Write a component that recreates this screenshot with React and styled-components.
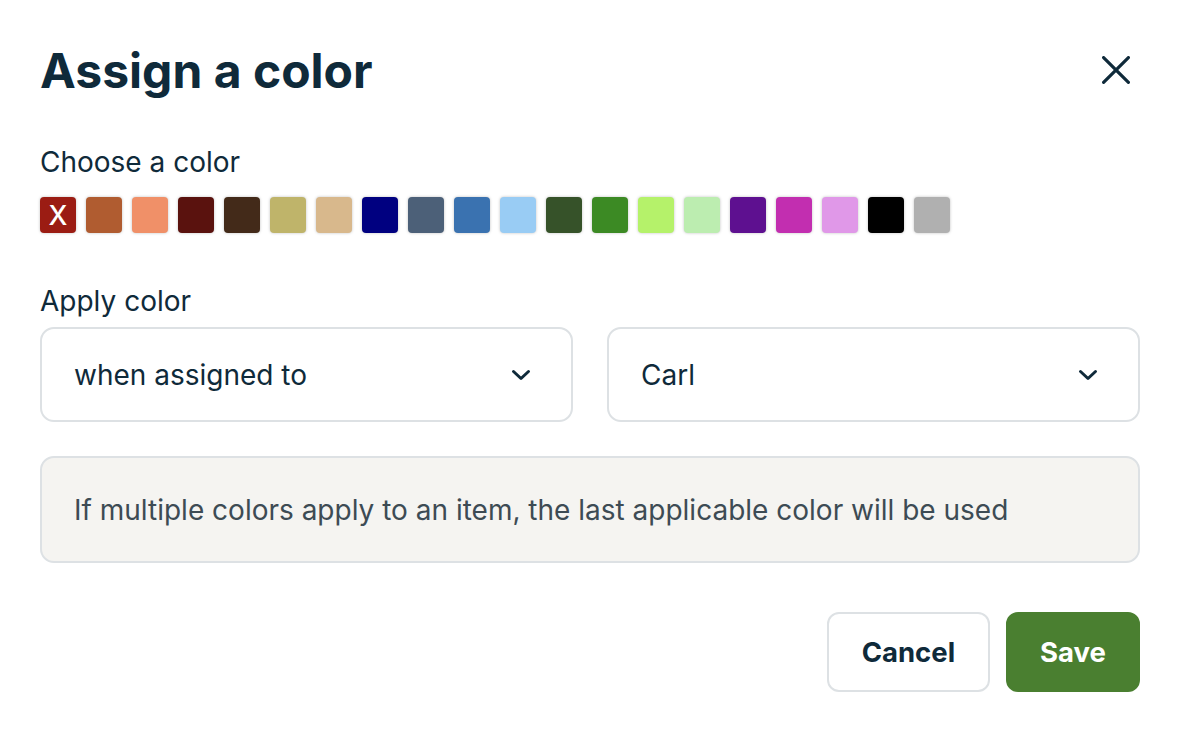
import React from "react";
import styled, { createGlobalStyle } from "styled-components";

const GlobalStyle = createGlobalStyle`
   body {
      margin: 0;
      background: #ffffff;
      font-family: Inter, "Noto Sans", sans-serif;
      color: #0f2a3a;
   }
`;

const Dialog = styled.div`
   width: 1100px;
   padding: 40px 40px 0;
   display: flex;
   flex-direction: column;
`;

const Header = styled.div`
   display: flex;
   justify-content: space-between;
   align-items: center;
   height: 60px;
`;

const Title = styled.h1`
   margin: 0;
   font-size: 48px;
   font-weight: 700;
   color: #0f2a3a;
`;

const CloseButton = styled.button`
   border: none;
   background: none;
   padding: 0;
   width: 28px;
   height: 28px;
   margin-right: 10px;
   display: flex;
   align-items: center;
   justify-content: center;
   color: #0f2a3a;
   cursor: pointer;
`;

const Label = styled.div`
   font-size: 28px;
   line-height: 34px;
   color: #0f2a3a;
   margin-top: ${({ top }) => top}px;
`;

const Swatches = styled.div`
   display: flex;
   gap: 10px;
   margin-top: 18px;
`;

const Swatch = styled.div`
   width: 36px;
   height: 36px;
   border-radius: 4px;
   background: ${({ color }) => color};
   box-shadow: 0 0 3px rgba(0, 0, 0, 0.25);
   display: flex;
   align-items: center;
   justify-content: center;
   color: #fff;
   font-size: 27px;
   font-weight: 500;
`;

const SelectRow = styled.div`
   display: grid;
   grid-template-columns: 1fr 1fr;
   gap: 34px;
   margin-top: 9px;
`;

const Select = styled.div`
   height: 95px;
   box-sizing: border-box;
   border: 2px solid #dde1e4;
   border-radius: 14px;
   padding: 0 40px 0 32px;
   display: flex;
   align-items: center;
   justify-content: space-between;
   font-size: 28px;
   color: #0f2a3a;
`;

const Note = styled.div`
   margin-top: 34px;
   height: 107px;
   box-sizing: border-box;
   background: #f5f4f1;
   border: 2px solid #dde1e4;
   border-radius: 14px;
   padding: 0 32px;
   display: flex;
   align-items: center;
   font-size: 28px;
   color: #3d4b54;
`;

const Footer = styled.div`
   display: flex;
   justify-content: flex-end;
   gap: 16px;
   margin-top: 49px;
`;

const Button = styled.button`
   height: 80px;
   box-sizing: border-box;
   padding: 0 ${({ primary }) => (primary ? 32 : 33)}px;
   border-radius: 12px;
   border: 2px solid ${({ primary }) => (primary ? "#4a7f30" : "#dde1e4")};
   background: ${({ primary }) => (primary ? "#4a7f30" : "#ffffff")};
   color: ${({ primary }) => (primary ? "#ffffff" : "#0f2a3a")};
   font-family: Inter, "Noto Sans", sans-serif;
   font-size: 27.5px;
   font-weight: 700;
   cursor: pointer;
`;

const colors = [
   "#9b1c13",
   "#b05c30",
   "#f09068",
   "#5a120e",
   "#432a19",
   "#bfb46a",
   "#d8b88c",
   "#000080",
   "#4c6078",
   "#3a72b0",
   "#99ccf4",
   "#365229",
   "#3c8a24",
   "#b5f26a",
   "#bcedb0",
   "#5e1090",
   "#c22eb0",
   "#e098e8",
   "#000000",
   "#b0b0b0",
];

const Chevron = () => (
   <svg width="20" height="20" viewBox="0 0 20 20" fill="none">
      <path
         d="M2.5 6.5l7.5 7 7.5-7"
         stroke="#0f2a3a"
         strokeWidth="3"
         strokeLinecap="round"
         strokeLinejoin="round"
      />
   </svg>
);

const App = () => {
   return (
      <>
         <GlobalStyle />
         <Dialog>
            <Header>
               <Title>Assign a color</Title>
               <CloseButton aria-label="close">
                  <svg width="28" height="28" viewBox="0 0 28 28" fill="none">
                     <path
                        d="M1.6 1.6l24.8 24.8M26.4 1.6L1.6 26.4"
                        stroke="#0f2a3a"
                        strokeWidth="3.2"
                        strokeLinecap="round"
                     />
                  </svg>
               </CloseButton>
            </Header>
            <Label top={45}>Choose a color</Label>
            <Swatches>
               {colors.map((c, i) => (
                  <Swatch key={c} color={c}>
                     {i === 0 ? "X" : null}
                  </Swatch>
               ))}
            </Swatches>
            <Label top={51}>Apply color</Label>
            <SelectRow>
               <Select>
                  when assigned to <Chevron />
               </Select>
               <Select>
                  Carl <Chevron />
               </Select>
            </SelectRow>
            <Note>
               If multiple colors apply to an item, the last applicable color
               will be used
            </Note>
            <Footer>
               <Button>Cancel</Button>
               <Button primary>Save</Button>
            </Footer>
         </Dialog>
      </>
   );
};

export default App;
